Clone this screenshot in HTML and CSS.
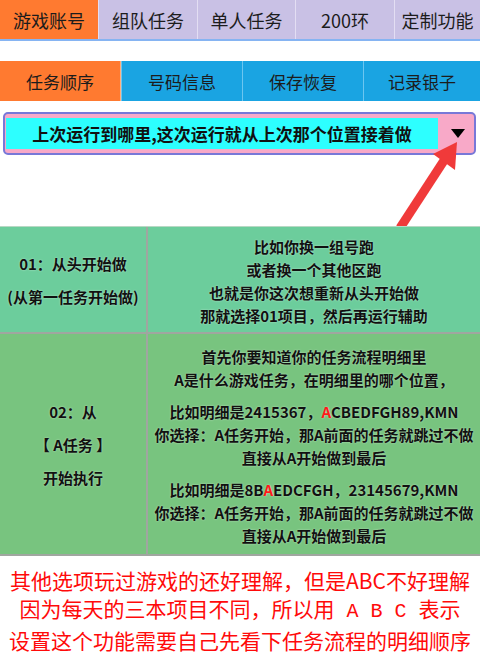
FILE: index.html
```html
<!DOCTYPE html>
<html lang="zh">
<head>
<meta charset="utf-8">
<title>任务顺序</title>
<link rel="stylesheet" href="styles.css">
</head>
<body>
<div class="page">
  <nav class="tabs top">
    <div class="tab t1 active">游戏账号</div>
    <div class="tab t2">组队任务</div>
    <div class="tab t3">单人任务</div>
    <div class="tab t4">200环</div>
    <div class="tab t5">定制功能</div>
  </nav>

  <nav class="tabs sub">
    <div class="stab active">任务顺序</div>
    <div class="stab">号码信息</div>
    <div class="stab">保存恢复</div>
    <div class="stab last">记录银子</div>
  </nav>

  <div class="select">
    <div class="select-value">上次运行到哪里,这次运行就从上次那个位置接着做</div>
    <div class="select-btn"><span class="caret"></span></div>
  </div>

  <div class="spacer"></div>

  <div class="table">
    <div class="cell left r1">
      <div>01：从头开始做</div>
      <div>(从第一任务开始做)</div>
    </div>
    <div class="cell right r1">
      <p>比如你换一组号跑<br>或者换一个其他区跑<br>也就是你这次想重新从头开始做<br>那就选择01项目，然后再运行辅助</p>
    </div>
    <div class="cell left r2">
      <div>02：从</div>
      <div>【 A任务 】</div>
      <div>开始执行</div>
    </div>
    <div class="cell right r2">
      <p>首先你要知道你的任务流程明细里<br>A是什么游戏任务，在明细里的哪个位置，</p>
      <p>比如明细是2415367，<span class="hl">A</span>CBEDFGH89,KMN<br>你选择：A任务开始，那A前面的任务就跳过不做<br>直接从A开始做到最后</p>
      <p>比如明细是8B<span class="hl">A</span>EDCFGH，23145679,KMN<br>你选择：A任务开始，那A前面的任务就跳过不做<br>直接从A开始做到最后</p>
    </div>
  </div>

  <div class="note">
    <div>其他选项玩过游戏的还好理解，但是ABC不好理解</div>
    <div>因为每天的三本项目不同，所以用<span class="mono"> A B C </span>表示</div>
    <div>设置这个功能需要自己先看下任务流程的明细顺序</div>
  </div>

  <svg class="arrow" width="480" height="655" viewBox="0 0 480 655">
    <line x1="400" y1="228" x2="445" y2="159" stroke="#f03a3a" stroke-width="9"/>
    <polygon points="457,142 433,154 455,170" fill="#f03a3a"/>
  </svg>
</div>
</body>
</html>
```

FILE: styles.css
```css
* { box-sizing: border-box; }
html, body { margin: 0; padding: 0; background: #fff; }
body {
  font-family: "Noto Sans CJK SC", "Noto Sans", sans-serif;
  color: #1c1c1c;
}
.page {
  position: relative;
  width: 480px;
  height: 655px;
  overflow: hidden;
}

/* top tabs */
.tabs { display: flex; }
.tabs.top {
  height: 41px;
  border-bottom: 2px solid #86b4f2;
}
.tab {
  display: flex;
  align-items: center;
  justify-content: center;
  font-size: 18px;
  background: #c9c1e5;
  border-left: 1px solid #e3def3;
  white-space: nowrap;
}
.tab.active { background: #ff7a30; border-left: none; }
.t1 { width: 98px; }
.t2 { width: 99px; }
.t3 { width: 98px; }
.t4 { width: 99px; }
.t5 { flex: 1; }

/* sub tabs */
.tabs.sub {
  margin-top: 20px;
  height: 40px;
}
.stab {
  width: 121px;
  display: flex;
  align-items: center;
  justify-content: center;
  font-size: 17px;
  background: #1aa4e2;
  border-left: 1px solid #6cc6f0;
  white-space: nowrap;
}
.stab.active { background: #ff7a30; border-left: none; border-right: 1px solid #ffb080; }
.stab.last { flex: 1; }

/* select */
.select {
  margin: 11px 0 0 3px;
  width: 473px;
  height: 43px;
  border: 2px solid #7878d8;
  border-radius: 5px;
  background: #f8a9c8;
  display: flex;
  padding: 4px 0 4px 1px;
}
.select-value {
  width: 432px;
  background: #2dffff;
  display: flex;
  align-items: center;
  justify-content: center;
  font-size: 17px;
  font-weight: bold;
  color: #111;
  white-space: nowrap;
}
.select-btn {
  flex: 1;
  display: flex;
  align-items: center;
  justify-content: center;
  padding-left: 4px;
}
.caret {
  width: 0; height: 0;
  border-left: 7px solid transparent;
  border-right: 7px solid transparent;
  border-top: 9px solid #000;
}

.spacer { height: 71px; }

/* table */
.table {
  display: grid;
  grid-template-columns: 148px 1fr;
  grid-template-rows: 107px 220px;
  border-top: 1px solid #b8d8c4;
  border-bottom: 2px solid #a0a6a0;
  font-size: 15px;
  font-weight: bold;
  color: #111;
  text-shadow: 0 0 2px rgba(255,255,255,0.55);
  position: relative;
  z-index: 1;
}
.cell {
  display: flex;
  flex-direction: column;
  justify-content: center;
  align-items: center;
  text-align: center;
  white-space: nowrap;
}
.cell.left { border-right: 2px solid #a0a6a0; line-height: 33px; }
.r1 { background: #6ccd9c; border-bottom: 2px solid #a0a6a0; }
.r2 { background: #78c47f; }
.cell.right p { margin: 0; line-height: 23px; }
.cell.right.r1 p { padding-top: 2px; }
.cell.right.r2 p + p { margin-top: 9px; }
.cell.right.r2 { padding-top: 4px; }
.hl { color: #ff1a1a; }

/* note */
.note {
  padding-top: 10px;
  text-align: center;
  color: #ff0a0a;
  font-size: 21px;
  line-height: 28px;
  white-space: nowrap;
}
.mono { font-family: "Liberation Mono", monospace; font-size: 20px; }

.arrow {
  position: absolute;
  left: 0; top: 0;
  pointer-events: none;
  z-index: 0;
}
```
